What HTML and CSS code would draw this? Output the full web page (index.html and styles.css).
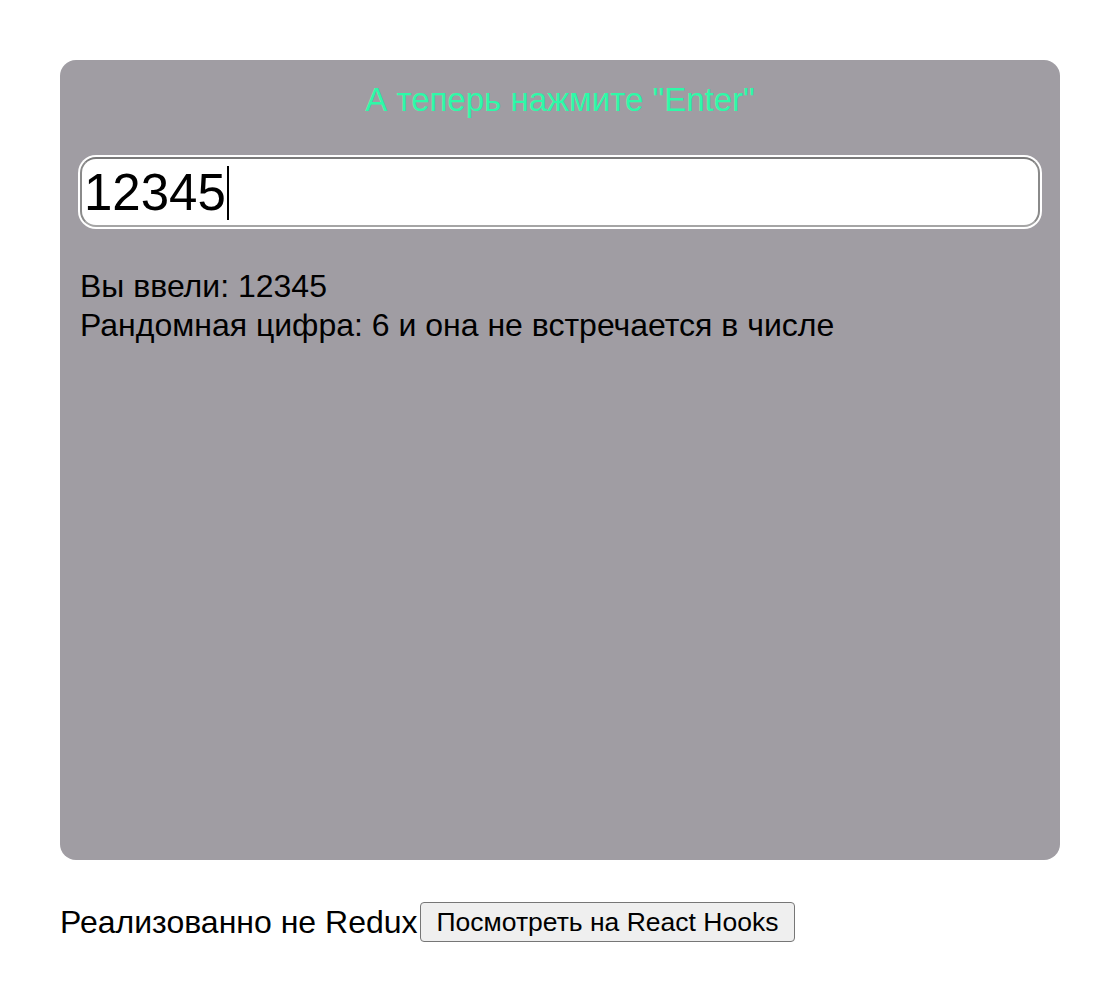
FILE: index.html
```html
<!DOCTYPE html>
<html lang="ru">
<head>
<meta charset="utf-8">
<title>Угадай цифру</title>
<link rel="stylesheet" href="styles.css">
</head>
<body>
<div class="page">
  <div class="card">
    <div class="hint">А теперь нажмите "Enter"</div>
    <div class="field-wrap">
      <input class="field" type="text" value="12345">
    </div>
    <div class="result">
      <div>Вы ввели: 12345</div>
      <div>Рандомная цифра: 6 и она не встречается в числе</div>
    </div>
  </div>
  <div class="footer">
    <span class="note">Реализованно не Redux</span><button class="btn">Посмотреть на React Hooks</button>
  </div>
</div>
</body>
</html>
```

FILE: styles.css
```css
html, body {
  margin: 0;
  padding: 0;
  background: #ffffff;
}
body {
  font-family: "Liberation Sans", Arial, sans-serif;
  color: #000;
}
.page {
  padding: 60px 40px 0 60px;
}
.card {
  width: 1000px;
  height: 800px;
  box-sizing: border-box;
  background: #a09da3;
  border-radius: 16px;
  padding: 20px 20px;
}
.hint {
  text-align: center;
  color: #2ef9a8;
  font-size: 33px;
  line-height: 40px;
}
.field-wrap {
  position: relative;
  margin-top: 37px;
  width: 960px;
}
.field-wrap::after {
  content: "";
  position: absolute;
  left: 147px;
  top: 9px;
  width: 2px;
  height: 54px;
  background: #000;
}
.field {
  display: block;
  box-sizing: border-box;
  width: 960px;
  height: 70px;
  border: 2px solid #8a8a8a;
  border-top-color: #7a7a7a;
  border-bottom-color: #a5a5a5;
  border-radius: 16px;
  box-shadow: 0 0 0 2px #ffffff;
  background: #fff;
  font-family: "Liberation Sans", Arial, sans-serif;
  font-size: 51px;
  padding: 0 2px;
  color: #000;
  outline: none;
}
.result {
  margin-top: 40px;
  font-size: 32px;
  line-height: 39px;
}
.footer {
  margin-top: 42px;
  display: flex;
  align-items: center;
  font-size: 32px;
}
.btn {
  font-family: "Liberation Sans", Arial, sans-serif;
  font-size: 26.5px;
  height: 40px;
  padding: 0 16px;
  margin-left: 2px;
  background: #efefef;
  border: 1px solid #767676;
  border-radius: 4px;
  color: #000;
}
```
